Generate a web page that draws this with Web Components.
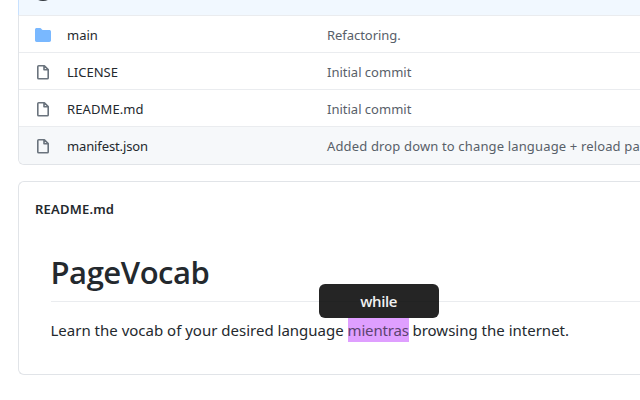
<!DOCTYPE html>
<html lang="en"><head><meta charset="utf-8"><title>PageVocab</title>
<style>
html,body{margin:0;height:400px;overflow:hidden;background:#fff}
body{font:13px/20px "Noto Sans","Open Sans",sans-serif;color:#24292e}
</style></head><body>
<repo-page>
<file-list>
<file-row kind="folder" name="main" message="Refactoring." style="--ms:-.05px"></file-row>
<file-row name="LICENSE" message="Initial commit"></file-row>
<file-row name="README.md" message="Initial commit" style="--ns:.1px"></file-row>
<file-row name="manifest.json" message="Added drop down to change language + reload pa" style="--ns:-.12px;--ms:.15px" active></file-row>
</file-list>
<readme-box name="README.md">
<span slot="title">PageVocab</span>Learn the vocab of your desired language <vocab-word meaning="while">mientras</vocab-word> browsing the internet.
</readme-box>
</repo-page>
<script>
class RepoPage extends HTMLElement{
  connectedCallback(){
    this.attachShadow({mode:'open'}).innerHTML=`<style>
    :host{display:flex;flex-direction:column;gap:16px;width:100%;padding-left:18px;box-sizing:border-box}
    </style><slot></slot>`;
  }
}
class FileList extends HTMLElement{
  connectedCallback(){
    this.attachShadow({mode:'open'}).innerHTML=`<style>
    :host{display:block}
    .head{height:15px;background:#f1f8ff;border-left:1px solid #c8e1ff;overflow:hidden;display:flex}
    .avatar{width:24px;height:24px;border-radius:50%;margin:-23px 0 0 12px;background:#30363c}
    .rows{display:flex;flex-direction:column;border:1px solid #e1e4e8;border-width:0 0 1px 1px;border-radius:0 0 0 6px;overflow:hidden}
    </style><div class="head"><div class="avatar"></div></div><div class="rows"><slot></slot></div>`;
  }
}
class FileRow extends HTMLElement{
  connectedCallback(){
    const folder=this.getAttribute('kind')==='folder';
    const icon=folder
      ?'<path fill="#79b8ff" d="M1.7 1h3.4c.6 0 .9.2 1.2.7l.6.9c.2.3.4.4.8.4h6.6C15.3 3 16 3.7 16 4.7v8.6c0 1-.7 1.7-1.7 1.7H1.7C.7 15 0 14.300 0 13.300V2.700C0 1.700.7 1 1.700 1z"/>'
      :'<path fill="none" stroke="#6a737d" stroke-width="1.600" stroke-linejoin="round" d="M4.100 1.800h5.300l3.800 3.800v8.300c0 .6-.3.9-.9.9H3.700c-.6 0-.9-.3-.9-.9V2.700c0-.6.3-.9.9-.9h.4M9 1.800v4h4.200"/>';
    this.attachShadow({mode:'open'}).innerHTML=`<style>
    :host{display:grid;grid-template-columns:16px 244px minmax(0,1fr);column-gap:16px;align-items:center;height:37px;box-sizing:border-box;padding:2px 0 0 16px;border-top:1px solid #eaecef}
    :host([active]){background:#f6f8fa;height:38px;padding-bottom:1px}
    svg{display:block}
    .name{letter-spacing:var(--ns,0);white-space:nowrap}
    .message{color:#586069;letter-spacing:var(--ms,0);white-space:nowrap}
    </style><svg width="16" height="16" viewBox="0 0 16 16">${icon}</svg><span class="name">${this.getAttribute('name')}</span><span class="message">${this.getAttribute('message')}</span>`;
  }
}
class ReadmeBox extends HTMLElement{
  connectedCallback(){
    this.attachShadow({mode:'open'}).innerHTML=`<style>
    :host{display:block;height:194px;box-sizing:border-box;border:1px solid #e1e4e8;border-right:0;border-radius:6px 0 0 6px}
    .name{font-weight:600;padding:17px 16px 0;height:20px;letter-spacing:.2px}
    article{padding-left:31.500px}
    h1{margin:33px 0 16px;height:50px;box-sizing:border-box;border-bottom:1px solid #eaecef;font:600 31px/40px "Open Sans","Noto Sans",sans-serif;letter-spacing:-.45px}
    p{margin:0;font-size:15px;line-height:24px;white-space:nowrap}
    </style><div class="name">${this.getAttribute('name')}</div><article><h1><slot name="title"></slot></h1><p><slot></slot></p></article>`;
  }
}
class VocabWord extends HTMLElement{
  connectedCallback(){
    this.attachShadow({mode:'open'}).innerHTML=`<style>
    :host{display:inline-block;position:relative;height:24px;background:#df9fff;color:#5c4370;width:61px;letter-spacing:-.18px}
    .tip{position:absolute;left:50%;bottom:100%;transform:translateX(-50%);margin-left:.5px;width:120px;height:34px;border-radius:6px;background:rgba(0,0,0,.855);color:#f1f1f1;text-align:center;font:600 15px/34px "Open Sans","Noto Sans",sans-serif;letter-spacing:-.4px}
    </style><slot></slot><span class="tip">${this.getAttribute('meaning')}</span>`;
  }
}
customElements.define('repo-page',RepoPage);
customElements.define('file-list',FileList);
customElements.define('file-row',FileRow);
customElements.define('readme-box',ReadmeBox);
customElements.define('vocab-word',VocabWord);
</script></body></html>
